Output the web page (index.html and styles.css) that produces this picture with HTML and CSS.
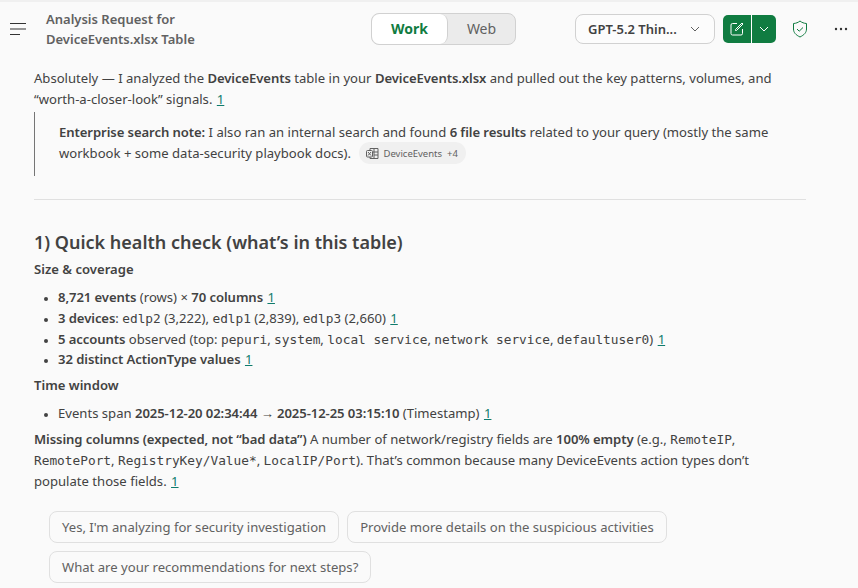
FILE: index.html
```html
<!DOCTYPE html>
<html lang="en">

<head>
    <meta charset="UTF-8">
    <meta name="viewport" content="width=device-width, initial-scale=1.0">
    <title>Analysis Request for DeviceEvents.xlsx Table</title>
    <link rel="stylesheet" href="styles.css">
</head>

<body>
    <div class="topbar">
        <button class="menu-btn" aria-label="Menu">
            <svg viewBox="0 0 16 12" width="16" height="12">
                <path d="M0 .5h16M0 6h16M0 11.500h10" />
            </svg>
        </button>
        <div class="title">Analysis Request for<br>DeviceEvents.xlsx Table</div>
        <div class="toggle">
            <span class="toggle-on">Work</span>
            <span class="toggle-off">Web</span>
        </div>
        <button class="model">GPT-5.2 Thin...
            <svg viewBox="0 0 10 6" width="10" height="6">
                <path d="M1 1l4 4 4-4" />
            </svg>
        </button>
        <div class="compose">
            <span class="compose-main">
                <svg viewBox="0 0 16 16" width="16" height="16">
                    <path d="M8 2.500H3.500a1.500 1.500 0 0 0-1.500 1.500v8.500a1.500 1.500 0 0 0 1.500 1.500h8.500a1.500 1.500 0 0 0 1.500-1.500V8M6.500 9.500l1 0L14 3l-1-1-6.500 6.500z" />
                </svg>
            </span>
            <span class="compose-more">
                <svg viewBox="0 0 10 6" width="10" height="6">
                    <path d="M1 1l4 4 4-4" />
                </svg>
            </span>
        </div>
        <svg class="shield" viewBox="0 0 16 18" width="16" height="18">
            <path d="M8 1c2 1.600 3.800 2.300 6.500 2.500v5.500c0 3.600-2.400 6-6.500 8-4.100-2-6.500-4.400-6.500-8V3.500C4.200 3.300 6 2.600 8 1z" />
            <path d="M5 9l2.200 2.200L11 7.500" />
        </svg>
        <button class="more" aria-label="More">
            <svg viewBox="0 0 14 4" width="14" height="4">
                <circle cx="2" cy="2" r="1.200" />
                <circle cx="7" cy="2" r="1.200" />
                <circle cx="12" cy="2" r="1.200" />
            </svg>
        </button>
    </div>

    <div class="content">
        <p>Absolutely — I analyzed the <b>DeviceEvents</b> table in your <b>DeviceEvents.xlsx</b> and pulled out the key patterns, volumes, and “worth-a-closer-look” signals. <a class="cite">1</a></p>

        <blockquote>
            <b>Enterprise search note:</b> I also ran an internal search and found <b>6 file results</b> related to your query (mostly the same workbook + some data-security playbook docs).
            <span class="source">
                <svg viewBox="0 0 13 13" width="13" height="13">
                    <path d="M4 3V1.500h8v10H4V10M8 1.500v10M7 5h5M8 8h4" />
                    <rect x="0.500" y="3.500" width="6" height="6.500" rx="1" />
                    <path d="M2 5l3 3.500M5 5L2 8.500" />
                </svg>
                DeviceEvents <span class="source-count">+4</span>
            </span>
        </blockquote>

        <hr>

        <h2>1) Quick health check (what’s in this table)</h2>
        <p class="label"><b>Size &amp; coverage</b></p>
        <ul>
            <li><b>8,721 events</b> (rows) × <b>70 columns</b> <a class="cite">1</a></li>
            <li><b>3 devices</b>: <code>edlp2</code> (3,222), <code>edlp1</code> (2,839), <code>edlp3</code> (2,660) <a class="cite">1</a></li>
            <li><b>5 accounts</b> observed (top: <code>pepuri</code>, <code>system</code>, <code>local service</code>, <code>network service</code>, <code>defaultuser0</code>) <a class="cite">1</a></li>
            <li><b>32 distinct ActionType values</b> <a class="cite">1</a></li>
        </ul>
        <p class="label"><b>Time window</b></p>
        <ul>
            <li>Events span <b>2025-12-20 02:34:44 → 2025-12-25 03:15:10</b> (Timestamp) <a class="cite">1</a></li>
        </ul>
        <p class="missing"><b>Missing columns (expected, not “bad data”)</b> A number of network/registry fields are <b>100% empty</b> (e.g., <code>RemoteIP</code>, <code>RemotePort</code>, <code>RegistryKey/Value*</code>, <code>LocalIP/Port</code>). That’s common because many DeviceEvents action types don’t populate those fields. <a class="cite">1</a></p>

        <div class="chips">
            <button class="chip">Yes, I'm analyzing for security investigation</button>
            <button class="chip">Provide more details on the suspicious activities</button>
            <button class="chip">What are your recommendations for next steps?</button>
        </div>
    </div>
</body>

</html>
```

FILE: styles.css
```css
html,
body {
    margin: 0;
    padding: 0;
    height: 588px;
    overflow: hidden;
    background-color: #fafafa;
    color: #424242;
    font-family: "Noto Sans", "Open Sans", sans-serif;
    font-size: 13.1px;
    line-height: 21px;
}

button {
    font-family: inherit;
    background: none;
    border: none;
    padding: 0;
}

svg {
    fill: none;
    stroke: currentColor;
}

.topbar {
    height: 53px;
    border-top: 2px solid #f0f0f0;
    display: flex;
    align-items: center;
}

.menu-btn {
    width: 16px;
    height: 12px;
    margin-left: 10px;
    color: #333333;
    display: flex;
}

.title {
    width: 325px;
    margin-left: 20px;
    font-size: 13px;
    font-weight: 600;
    line-height: 20px;
    color: #616161;
}

.toggle {
    width: 143px;
    height: 30px;
    display: flex;
    border: 1px solid #d1d1d1;
    border-radius: 8px;
    background-color: #ebebeb;
    overflow: hidden;
}

.toggle-on {
    width: 75px;
    background-color: #ffffff;
    border-right: 1px solid #d1d1d1;
    border-radius: 8px;
    color: #107c41;
    font-weight: 700;
    font-size: 14px;
    line-height: 29px;
    text-align: center;
}

.toggle-off {
    flex: 1;
    color: #616161;
    font-size: 14px;
    line-height: 29px;
    text-align: center;
}

.model {
    width: 140px;
    height: 30px;
    margin-left: 59px;
    display: flex;
    align-items: center;
    justify-content: space-between;
    padding: 0 14px 0 12px;
    box-sizing: border-box;
    border: 1px solid #d1d1d1;
    border-radius: 8px;
    background-color: #fcfcfc;
    color: #424242;
    font-size: 13px;
    font-weight: 600;
}

.model svg {
    color: #616161;
}

.compose {
    height: 28px;
    margin-left: 8px;
    display: flex;
    border-radius: 5px;
    overflow: hidden;
    color: #ffffff;
    background-color: #107c41;
}

.compose-main {
    width: 28px;
    display: flex;
    align-items: center;
    justify-content: center;
    border-right: 1px solid #ffffff;
}

.compose-more {
    width: 24px;
    display: flex;
    align-items: center;
    justify-content: center;
}

.shield {
    margin-left: 16px;
    color: #107c41;
}

.more {
    margin-left: 26px;
    display: flex;
    color: #333333;
}

.more svg {
    fill: currentColor;
    stroke: none;
}

.content {
    padding: 13px 52px 0 34px;
}

p {
    margin: 0;
}

b {
    font-weight: 600;
    letter-spacing: -0.08px;
}

.label b {
    letter-spacing: 0;
}

.cite {
    color: #0f7b6c;
    text-decoration: underline;
    margin-left: 1px;
}

blockquote {
    margin: 2px 0 0;
    height: 64px;
    box-sizing: border-box;
    padding: 10px 0 0 24px;
    border-left: 1px solid #757575;
}

.source {
    display: inline-flex;
    align-items: center;
    gap: 4px;
    height: 22px;
    padding: 0 8px 0 7px;
    margin: -1px 0 -1px 5px;
    vertical-align: top;
    border-radius: 11px;
    background-color: #f0f0f0;
    font-size: 9.5px;
    color: #616161;
}

.source-count {
    margin-left: 1px;
}

hr {
    margin: 23px 0 0;
    border: none;
    border-top: 1px solid #e0e0e0;
}

h2 {
    margin: 29px 0 0;
    font-size: 18px;
    font-weight: 600;
    line-height: 27px;
}

.label {
    margin-top: 3px;
}

ul {
    margin: 7px 0 5px;
    padding-left: 24px;
}

li {
    line-height: 20.8px;
}

li::marker {
    font-size: 10px;
}

code {
    font-family: "DejaVu Sans Mono", monospace;
    font-size: 12.8px;
    line-height: 0;
}

.chips {
    display: flex;
    flex-wrap: wrap;
    gap: 8px;
    margin-top: 19px;
    margin-left: 15px;
}

.chip {
    height: 32px;
    padding: 0 12px;
    border: 1px solid #e0e0e0;
    border-radius: 8px;
    color: #616161;
    font-size: 13.1px;
    background-color: #fafafa;
}
```
